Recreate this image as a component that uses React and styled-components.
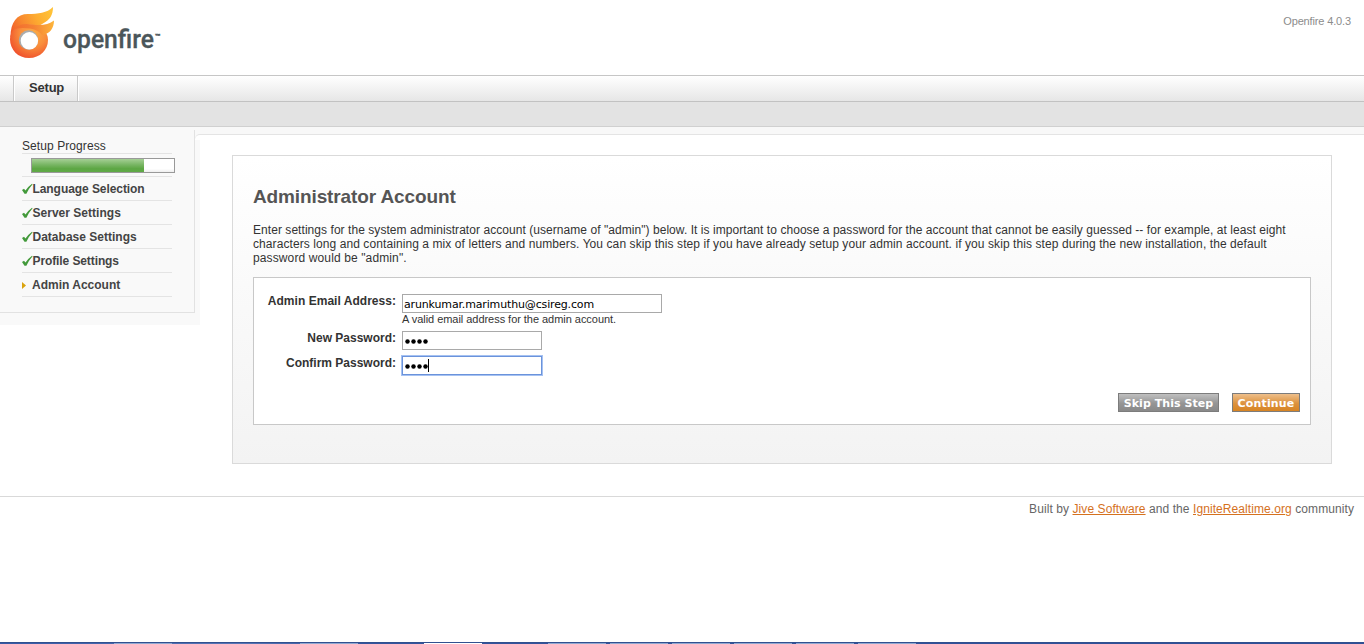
import React from 'react';
import styled, { createGlobalStyle } from 'styled-components';

const GlobalStyle = createGlobalStyle`
  * { box-sizing: border-box; }
  body { margin: 0; background: #fff; color: #333; font: 12px/14px "Liberation Sans", Arial, sans-serif; }
`;
const Page = styled.div`
  display: flex; flex-direction: column; height: 644px; overflow: hidden;
`;
const Header = styled.header`
  display: flex; justify-content: space-between; height: 75px; padding: 0 13px 0 0;
`;
const Logo = styled.svg`
  display: block; width: 200px; height: 70px;
`;
const Version = styled.span`
  margin-top: 14px; color: #8c8c8c; font-size: 11px; letter-spacing: -0.14px;
`;
const Nav = styled.nav`
  display: flex; height: 27px; padding-left: 13px;
  border-top: 1px solid #c6c6c6; border-bottom: 1px solid #c2c2c2;
  background: linear-gradient(#fff, #e6e6e6);
`;
const Tab = styled.a`
  width: 65px; height: 25px; padding: 5px 0 0 15px;
  border-left: 1px solid #c9c9c9; border-right: 1px solid #c9c9c9;
  box-shadow: inset 1px 0 #fff, 1px 0 #fff;
  font-size: 13px; font-weight: bold; letter-spacing: -0.2px; line-height: 14px;
`;
const SubNav = styled.div`
  height: 25px; background: #e3e3e3; border-bottom: 1px solid #d0d0d0;
`;
const Body = styled.div`
  display: flex; height: 369px;
  background: linear-gradient(#f8f8f8 0 10px, #fff 10px);
`;
const Sidebar = styled.aside`
  width: 200px; height: 198px; flex: none; background: #f9f9f9;
`;
const SidePanel = styled.div`
  width: 195px; height: 183px; margin-top: 3px; padding: 9px 22px 0;
  border-right: 1px solid #e2e2e2; border-bottom: 1px solid #e2e2e2;
`;
const SideTitle = styled.div`
  width: 150px; height: 15px; border-bottom: 1px solid #e4e4e4; letter-spacing: 0.08px;
`;
const ProgressRow = styled.div`
  width: 150px; height: 23px; padding: 4px 0 0 9px; border-bottom: 1px solid #e4e4e4;
`;
const Progress = styled.div`
  width: 144px; height: 15px; border: 1px solid #999; background: linear-gradient(#fff 75%, #eee);
`;
const Bar = styled.div`
  width: 112px; height: 13px; background: linear-gradient(#a5cf95, #77b562 45%, #5ca643 75%, #61aa47);
`;
const Step = styled.div`
  display: flex; width: 150px; height: 24px; padding-top: 5px;
  border-bottom: 1px solid #e4e4e4; font-weight: bold; color: #444; letter-spacing: ${p => p.$spacing}px;
  svg { flex: none; width: 10px; height: 14px; margin-right: ${p => p.$gap || 0}px; overflow: visible; }
`;
const Main = styled.main`
  flex: 1; height: 362px; margin: 7px 0 0 -5px; padding: 20px 32px 0 37px;
  border-top: 1px solid #e4e4e4; border-top-left-radius: 5px;
  background: linear-gradient(90deg, transparent 5px, #fff 5px), linear-gradient(#fff 0 5px, transparent 5px);
`;
const Card = styled.section`
  height: 309px; padding: 30px 20px 0; border: 1px solid #dadada;
  background: linear-gradient(#fff, #f3f3f3);
`;
const Title = styled.h1`
  margin: 0; height: 37px; color: #555; font-size: 19px; line-height: 22px; letter-spacing: -0.12px;
`;
const Intro = styled.p`
  margin: 0 0 12px; white-space: nowrap;
`;
const Line = styled.span`
  display: block; letter-spacing: ${p => p.$spacing}px;
`;
const Form = styled.form`
  display: flex; flex-direction: column; height: 148px; padding: 16px 10px 0;
  border: 1px solid #c8c8c8; background: #fff;
`;
const Field = styled.div`
  display: flex; height: ${p => p.$height}px;
`;
const Label = styled.label`
  width: 132px; margin-right: 6px; text-align: right; font-weight: bold; white-space: nowrap; letter-spacing: ${p => p.$spacing || 0}px;
`;
const Control = styled.div`
  display: flex; flex-direction: column;
`;
const Input = styled.div`
  display: flex; align-items: center; width: ${p => p.$width}px; height: 19px; padding: 1px 0 0 ${p => p.$inset}px;
  border: 1px solid ${p => (p.$focus ? '#6b93db' : '#a9a9a9')};
  box-shadow: ${p => (p.$focus ? '0 0 0 1px #a6c2f2' : 'none')};
  background: #fff; color: #000; font: 11px/15px "DejaVu Sans", Verdana, sans-serif; letter-spacing: -0.15px;
`;
const Dot = styled.i`
  width: 5px; height: 5px; margin: 1px 1px 0 0; border-radius: 50%; background: #000;
  transform: scale(0.9);
`;
const Caret = styled.i`
  width: 1px; height: 13px; margin: 0 0 1px -1px; background: #000;
`;
const Hint = styled.span`
  font-size: 11px; line-height: 13px; letter-spacing: -0.04px;
`;
const Actions = styled.div`
  display: flex; justify-content: flex-end; gap: 13px; margin-top: 18px;
`;
const Button = styled.button`
  width: ${p => p.$width}px; height: 19px; padding: 2px 0 0; border: 1px solid #7c7c7c; border-radius: 0;
  background: ${p => (p.$primary ? 'linear-gradient(#eebf8b, #dc923e 55%, #d78423)' : 'linear-gradient(#c0c0c0, #959595 55%, #898989)')};
  color: #fff; font: bold 11px/15px "DejaVu Sans", Verdana, sans-serif; letter-spacing: ${p => p.$spacing}px; white-space: nowrap;
`;
const Footer = styled.footer`
  flex: 1; padding: 5px 10px 0; border-top: 1px solid #d9d9d9; color: #666; text-align: right; letter-spacing: 0.08px;
  a { color: #d5711e; text-decoration: underline; }
`;
const Taskbar = styled.div`
  display: flex; height: 2px; background: linear-gradient(90deg, #3659a5, #5876b5 240px, #34549c 360px, #2f4f96); border-top: 1px solid #31508f;
`;
const Task = styled.span`
  width: ${p => p.$width}px; height: 1px; margin-left: ${p => p.$gap}px; background: ${p => (p.$active ? '#fff' : '#8fa8d0')};
`;

const Check = () => (
  <svg viewBox="0 0 10 14"><path d="M0 8.1 2 6.700l1.500 1.900Q6 4.500 10 1.700L10.600 2.300Q6.800 6.500 4.400 11.700H2.500Z" fill="#439a3b" /></svg>
);
const Arrow = () => (
  <svg viewBox="0 0 10 14"><path d="M0 4 4 7.5 0 11Z" fill="#daa30d" /></svg>
);
const Dots = () => <>{[0, 1, 2, 3].map(i => <Dot key={i} />)}</>;

const steps = [
  ['Language Selection', -0.07],
  ['Server Settings', 0.02],
  ['Database Settings', 0.01],
  ['Profile Settings', -0.1],
];
const tasks = [[114, 58], [128, 58], [66, 58, true], [66, 58], [4, 58], [4, 58], [4, 58], [4, 58], [4, 58]];

export default function App() {
  return (
    <Page>
      <GlobalStyle />
      <Header>
        <Logo viewBox="0 0 200 70" aria-label="openfire">
          <defs>
            <radialGradient id="ring" gradientUnits="userSpaceOnUse" cx="33" cy="34" r="26">
              <stop offset="0" stopColor="#fbae45" /><stop offset=".5" stopColor="#f98e3c" /><stop offset="1" stopColor="#ef4f2c" />
            </radialGradient>
            <linearGradient id="flame" gradientUnits="userSpaceOnUse" x1="10" y1="30" x2="50" y2="10">
              <stop offset="0" stopColor="#f15a29" /><stop offset=".3" stopColor="#f7862f" /><stop offset=".65" stopColor="#fdab30" /><stop offset="1" stopColor="#ffc238" />
            </linearGradient>
            <linearGradient id="tongue" gradientUnits="userSpaceOnUse" x1="13" y1="28" x2="54" y2="24">
              <stop offset="0" stopColor="#f26a2d" /><stop offset=".5" stopColor="#f58234" /><stop offset="1" stopColor="#fdb53b" />
            </linearGradient>
          </defs>
          <path d="M10.500 37C10.500 22 17 14 28 14C38 14 47 13 53 7C53 15 50 20 43 23.500L30 31Z" fill="url(#flame)" />
          <path d="M10 39C10 31 17 24 28 24C40 24 48 31 48 40C48 50 40 58 29 58C18 58 10 50 10 39Z" fill="url(#ring)" />
          <path d="M13 29.500Q18 24 27 24C39 26 48 25.500 54 20.500C54 28 50 34 42 35Q39 30 30 28.500Q19 27 13 29.500Z" fill="url(#tongue)" />
          <circle cx="28.500" cy="40" r="9.700" fill="#aaacad" />
          <circle cx="29.400" cy="40.800" r="8.700" fill="#fff" />
          <text x="63" y="48" fill="#4b565a" stroke="#4b565a" strokeWidth=".3" fontFamily="Roboto" fontSize="25.500" fontWeight="500" textLength="91" lengthAdjust="spacingAndGlyphs">openfire</text>
          <text x="155" y="38" fill="#4b565a" stroke="#4b565a" strokeWidth=".3" fontFamily="Roboto" fontSize="6" fontWeight="700" textLength="5.500" lengthAdjust="spacingAndGlyphs">™</text>
        </Logo>
        <Version>Openfire 4.0.3</Version>
      </Header>
      <Nav><Tab>Setup</Tab></Nav>
      <SubNav />
      <Body>
        <Sidebar>
          <SidePanel>
            <SideTitle>Setup Progress</SideTitle>
            <ProgressRow><Progress><Bar /></Progress></ProgressRow>
            {steps.map(([name, spacing]) => <Step key={name} $spacing={spacing} $gap={0.5}><Check />{name}</Step>)}
            <Step $spacing={0}><Arrow />Admin Account</Step>
          </SidePanel>
        </Sidebar>
        <Main>
          <Card>
            <Title>Administrator Account</Title>
            <Intro>
              <Line $spacing={0.053}>Enter settings for the system administrator account (username of "admin") below. It is important to choose a password for the account that cannot be easily guessed -- for example, at least eight</Line>
              <Line $spacing={0.082}>characters long and containing a mix of letters and numbers. You can skip this step if you have already setup your admin account. if you skip this step during the new installation, the default</Line>
              <Line $spacing={0.12}>password would be "admin".</Line>
            </Intro>
            <Form>
              <Field $height={37}>
                <Label $spacing={0.03}>Admin Email Address:</Label>
                <Control>
                  <Input $width={260} $inset={1}>arunkumar.marimuthu@csireg.com</Input>
                  <Hint>A valid email address for the admin account.</Hint>
                </Control>
              </Field>
              <Field $height={25}>
                <Label>New Password:</Label>
                <Input $width={140} $inset={2}><Dots /></Input>
              </Field>
              <Field $height={19}>
                <Label>Confirm Password:</Label>
                <Input $width={140} $inset={2} $focus><Dots /><Caret /></Input>
              </Field>
              <Actions>
                <Button type="button" $width={101} $spacing={0.06}>Skip This Step</Button>
                <Button type="button" $width={68} $spacing={0.15} $primary>Continue</Button>
              </Actions>
            </Form>
          </Card>
        </Main>
      </Body>
      <Footer>Built by <a>Jive Software</a> and the <a>IgniteRealtime.org</a> community</Footer>
      <Taskbar>{tasks.map(([gap, width, active], i) => <Task key={i} $gap={gap} $width={width} $active={active} />)}</Taskbar>
    </Page>
  );
}
